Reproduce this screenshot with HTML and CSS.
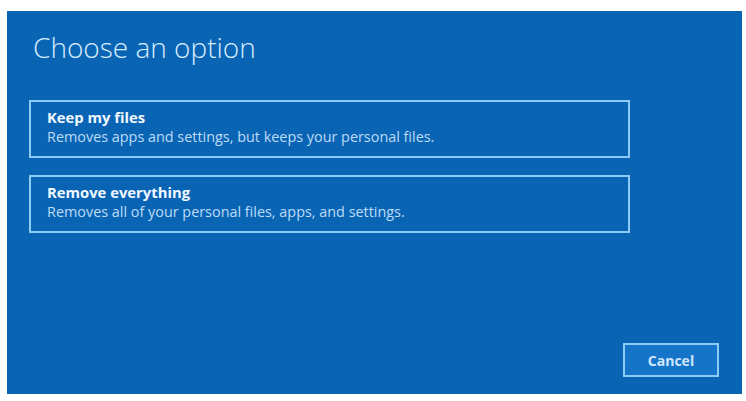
FILE: index.html
```
<!DOCTYPE html>
<html>
<head>
<meta charset="utf-8">
<link rel="stylesheet" href="styles.css">
</head>
<body>
<div class="panel">
  <h1 class="title">Choose an option</h1>
  <div class="options">
    <div class="option">
      <div class="opt-title">Keep my files</div>
      <div class="opt-desc">Removes apps and settings, but keeps your personal files.</div>
    </div>
    <div class="option">
      <div class="opt-title">Remove everything</div>
      <div class="opt-desc">Removes all of your personal files, apps, and settings.</div>
    </div>
  </div>
  <div class="footer">
    <button class="cancel">Cancel</button>
  </div>
</div>
</body>
</html>
```
FILE: styles.css
```
html, body {
  margin: 0;
  padding: 0;
  background: #ffffff;
}
body {
  padding: 11px 4px 7px 7px;
  font-family: "Open Sans", "Noto Sans", sans-serif;
}
.panel {
  width: 735px;
  height: 383px;
  background: #0a64b4;
  box-sizing: border-box;
  display: flex;
  flex-direction: column;
  padding: 0 23px 17px 22px;
}
.title {
  margin: 17px 0 0 4px;
  font-weight: 300;
  font-size: 28px;
  line-height: 38px;
  color: #d6ecff;
}
.options {
  display: flex;
  flex-direction: column;
  gap: 17px;
  margin-top: 34px;
}
.option {
  width: 601px;
  height: 58px;
  box-sizing: border-box;
  border: 2px solid #8ccbf5;
  padding: 5px 16px 0 16px;
  color: #e8f4ff;
}
.opt-title {
  font-weight: 700;
  font-size: 14.8px;
  line-height: 20px;
  color: #f0f8ff;
}
.opt-desc {
  font-size: 14.4px;
  line-height: 19px;
  color: #bcdcf7;
}
.footer {
  margin-top: auto;
  display: flex;
  justify-content: flex-end;
}
.cancel {
  width: 96px;
  height: 34px;
  box-sizing: border-box;
  border: 2px solid #8ccbf5;
  background: #1674c8;
  color: #cfe7fc;
  font-family: "Open Sans", "Noto Sans", sans-serif;
  font-weight: 700;
  font-size: 14px;
  padding: 0;
}
```
